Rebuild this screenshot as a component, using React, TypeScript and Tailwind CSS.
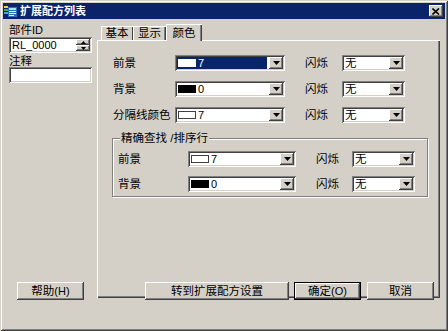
import React from "react";

const FONT = "font-['Liberation_Sans','Noto_Sans_CJK_SC',sans-serif]";
const SUNKEN =
  "shadow-[inset_1px_1px_0_#808080,inset_-1px_-1px_0_#ffffff,inset_2px_2px_0_#404040,inset_-2px_-2px_0_#d4d0c8]";
const RAISED =
  "shadow-[inset_-1px_-1px_0_#404040,inset_1px_1px_0_#ffffff,inset_-2px_-2px_0_#808080,inset_2px_2px_0_#d4d0c8]";

function Arrow() {
  return (
    <svg width="7" height="4" viewBox="0 0 7 4" className="block">
      <path d="M0 0h7L3.5 4z" fill="#000" />
    </svg>
  );
}

function DropBtn() {
  return (
    <div className={`flex h-full w-[14px] shrink-0 items-center justify-center bg-[#d4d0c8] ${RAISED}`}>
      <Arrow />
    </div>
  );
}

type ComboProps = {
  className: string;
  value: string;
  swatch?: "white" | "black";
  focused?: boolean;
};

function Combo({ className, value, swatch, focused }: ComboProps) {
  return (
    <div className={`flex h-[16px] shrink-0 bg-white p-[2px] ${SUNKEN} ${className}`}>
      <div
        className={
          focused
            ? "mr-[2px] flex min-w-0 flex-1 items-center bg-[#0a246a] text-white"
            : "flex min-w-0 flex-1 items-center text-black"
        }
      >
        {swatch && (
          <span
            className={
              swatch === "black"
                ? "ml-[1px] h-[8px] w-[18px] shrink-0 border border-black bg-black"
                : focused
                  ? "ml-[1px] h-[8px] w-[18px] shrink-0 border border-white bg-white"
                  : "ml-[1px] h-[8px] w-[18px] shrink-0 border border-[#404040] bg-white"
            }
          />
        )}
        <span className={swatch ? "ml-[2px] text-[11px] leading-[12px]" : "ml-[1px] leading-[12px]"}>{value}</span>
      </div>
      <DropBtn />
    </div>
  );
}

function Button({ children, className, isDefault }: { children: React.ReactNode; className: string; isDefault?: boolean }) {
  if (isDefault) {
    return (
      <div className={`h-[18px] shrink-0 border border-black ${className}`}>
        <div className={`flex h-full items-center justify-center bg-[#d4d0c8] leading-[12px] ${RAISED}`}>
          {children}
        </div>
      </div>
    );
  }
  return (
    <div className={`flex h-[18px] shrink-0 items-center justify-center bg-[#d4d0c8] leading-[12px] ${RAISED} ${className}`}>
      {children}
    </div>
  );
}

function TitleIcon() {
  return (
    <svg width="14" height="13" viewBox="0 0 14 13" className="block">
      <rect x="0" y="1" width="4" height="2" fill="#f4d03f" />
      <rect x="0" y="4" width="4" height="2" fill="#3cb043" />
      <rect x="0" y="7" width="4" height="2" fill="#4aa3df" />
      <rect x="4" y="2" width="9" height="10" fill="#2e6fb7" />
      <rect x="5" y="3" width="7" height="2" fill="#9fe7f5" />
      <rect x="5" y="6" width="7" height="1" fill="#d9f6ff" />
      <rect x="5" y="8" width="7" height="1" fill="#d9f6ff" />
      <rect x="5" y="10" width="5" height="1" fill="#d9f6ff" />
    </svg>
  );
}

function Row({ label, value, swatch, focused }: { label: string; value: string; swatch: "white" | "black"; focused?: boolean }) {
  return (
    <div className="flex h-[16px] items-center pl-[16px]">
      <span className="w-[62px] shrink-0 leading-[12px]">{label}</span>
      <Combo className="w-[110px]" value={value} swatch={swatch} focused={focused} />
      <span className="ml-[20px] w-[37px] shrink-0 leading-[12px]">闪烁</span>
      <Combo className="w-[63px]" value="无" />
    </div>
  );
}

function GroupRow({ label, value, swatch }: { label: string; value: string; swatch: "white" | "black" }) {
  return (
    <div className="flex h-[16px] items-center pl-[5px]">
      <span className="w-[70px] shrink-0 leading-[12px]">{label}</span>
      <Combo className="w-[108px]" value={value} swatch={swatch} />
      <span className="ml-[20px] w-[36px] shrink-0 leading-[12px]">闪烁</span>
      <Combo className="w-[63px]" value="无" />
    </div>
  );
}

export default function App() {
  return (
    <div
      className={`flex h-[331px] w-[448px] flex-col bg-[#d4d0c8] p-[3px] text-[11.5px] text-black ${FONT} shadow-[inset_1px_1px_0_#d4d0c8,inset_-1px_-1px_0_#404040,inset_2px_2px_0_#ffffff,inset_-2px_-2px_0_#808080]`}
    >
      {/* title bar */}
      <div className="flex h-[16px] shrink-0 items-center bg-[#0a246a] pr-[2px]">
        <div className="ml-[1px]">
          <TitleIcon />
        </div>
        <span className="ml-[2px] text-[11px] font-bold leading-[12px] text-white">扩展配方列表</span>
        <div className={`ml-auto flex h-[12px] w-[14px] items-center justify-center bg-[#d4d0c8] ${RAISED}`}>
          <svg width="8" height="7" viewBox="0 0 8 7" className="block">
            <path d="M0.5 0.5L7 6.5M7 0.5L0.5 6.5" stroke="#000" strokeWidth="1.6" />
          </svg>
        </div>
      </div>

      {/* body */}
      <div className="flex h-[258px] shrink-0 items-start pt-[5px]">
        <div className="ml-[6px] flex w-[83px] shrink-0 flex-col">
          <span className="h-[12px] leading-[12px]">
            部件<span className="text-[11px]">ID</span>
          </span>
          <div className={`mt-[1px] flex h-[16px] items-center bg-white p-[2px] ${SUNKEN}`}>
            <span className="ml-[1px] flex-1 text-[11px] leading-[12px]">RL_0000</span>
            <div className="flex h-full w-[14px] flex-col">
              <div className={`flex flex-1 items-center justify-center bg-[#d4d0c8] ${RAISED}`}>
                <svg width="5" height="3" viewBox="0 0 5 3" className="block">
                  <path d="M2.5 0L5 3H0z" fill="#000" />
                </svg>
              </div>
              <div className={`flex flex-1 items-center justify-center bg-[#d4d0c8] ${RAISED}`}>
                <svg width="5" height="3" viewBox="0 0 5 3" className="block">
                  <path d="M0 0h5L2.5 3z" fill="#000" />
                </svg>
              </div>
            </div>
          </div>
          <span className="mt-[2px] h-[12px] leading-[12px]">注释</span>
          <div className={`h-[16px] bg-white ${SUNKEN}`} />
        </div>

        {/* tab control */}
        <div className="ml-[5px] flex w-[343px] shrink-0 flex-col">
          <div className="flex h-[16px] items-end pl-[4px]">
            <div className="flex h-[14px] w-[32px] items-center justify-center leading-[12px] shadow-[inset_1px_1px_0_#ffffff,inset_-1px_0_0_#404040]">
              基本
            </div>
            <div className="flex h-[14px] w-[33px] items-center justify-center leading-[12px] shadow-[inset_1px_1px_0_#ffffff,inset_-1px_0_0_#404040,inset_-2px_0_0_#808080]">
              显示
            </div>
            <div className="relative z-10 mb-[-1px] flex h-[17px] w-[36px] items-start justify-center bg-[#d4d0c8] pt-[3px] leading-[12px] shadow-[inset_1px_1px_0_#ffffff,inset_-1px_0_0_#404040,inset_-2px_0_0_#808080]">
              颜色
            </div>
          </div>
          <div className="flex h-[258px] flex-col pt-[15px] shadow-[inset_1px_1px_0_#ffffff,inset_-1px_-1px_0_#404040,inset_-2px_-2px_0_#808080]">
            <Row label="前景" value="7" swatch="white" focused />
            <div className="mt-[10px]">
              <Row label="背景" value="0" swatch="black" />
            </div>
            <div className="mt-[10px]">
              <Row label="分隔线颜色" value="7" swatch="white" />
            </div>

            <div className="relative ml-[15px] mt-[15px] h-[59px] w-[316px] border border-[#808080] shadow-[inset_1px_1px_0_#ffffff,1px_1px_0_#ffffff]">
              <span className="absolute left-[7px] top-[-7px] bg-[#d4d0c8] px-[1px] leading-[12px]">精确查找 /排序行</span>
              <div className="flex flex-col pt-[12px]">
                <GroupRow label="前景" value="7" swatch="white" />
                <div className="mt-[9px]">
                  <GroupRow label="背景" value="0" swatch="black" />
                </div>
              </div>
            </div>
          </div>
        </div>
      </div>

      {/* buttons */}
      <div className="mt-[5px] flex shrink-0 items-center">
        <Button className="ml-[14px] w-[67px]">
          帮助<span className="text-[11px]">(H)</span>
        </Button>
        <Button className="ml-[61px] w-[144px]">转到扩展配方设置</Button>
        <Button className="ml-[5px] w-[67px]" isDefault>
          确定<span className="text-[11px]">(O)</span>
        </Button>
        <Button className="ml-[6px] w-[67px]">取消</Button>
      </div>
    </div>
  );
}
